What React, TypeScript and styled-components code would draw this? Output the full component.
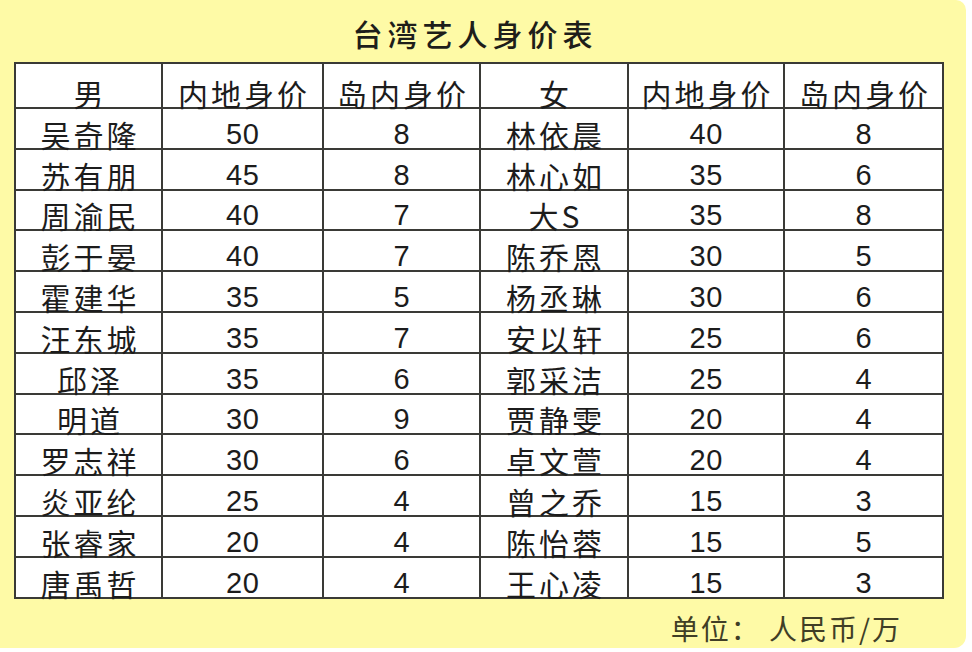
import React from "react";
import styled, { createGlobalStyle } from "styled-components";

const Global = createGlobalStyle`
  html, body { margin: 0; padding: 0; background: #ffffff; }
  body { width: 972px; height: 652px; overflow: hidden; }
`;

const Panel = styled.div`
  width: 966px;
  height: 648px;
  box-sizing: border-box;
  background: #fefaa6;
  border-top-right-radius: 10px;
  border-bottom-right-radius: 12px;
  padding-left: 14px;
  display: flex;
  flex-direction: column;
`;

const Title = styled.div`
  height: 62px;
  display: flex;
  align-items: center;
  justify-content: center;
  padding-right: 8px;
  width: 930px;
  box-sizing: border-box;
  font-family: "Noto Sans CJK SC", "Noto Sans", sans-serif;
  font-size: 30px;
  font-weight: 500;
  letter-spacing: 5px;
  color: #1e1e1a;
  padding-top: 4px;
`;

const Table = styled.div`
  display: grid;
  grid-template-columns: 147px 161px 157px 148px 156px 159px;
  grid-template-rows: 45px repeat(12, 40.8px);
  width: 930px;
  box-sizing: border-box;
  border-left: 2px solid #3a3a36;
  border-top: 2px solid #3a3a36;
  background: #ffffff;
`;

const Cell = styled.div<{ $num?: boolean }>`
  box-sizing: border-box;
  border-right: 2px solid #3a3a36;
  border-bottom: 2px solid #3a3a36;
  display: flex;
  align-items: flex-end;
  justify-content: center;
  overflow: visible;
  color: #1c1c1c;
  font-family: ${(p) =>
    p.$num
      ? `"Liberation Sans", Arial, "Noto Sans CJK SC", sans-serif`
      : `"Noto Sans CJK SC", "Noto Sans", sans-serif`};
  font-size: ${(p) => (p.$num ? "29px" : "30px")};
  letter-spacing: ${(p) => (p.$num ? "0.5px" : "3px")};
  line-height: ${(p) => (p.$num ? "29px" : "30px")};
`;

const CellText = styled.span<{ $num?: boolean }>`
  display: block;
  padding-left: ${(p) => (p.$num ? "0.5px" : "3px")};
  margin-bottom: -1px;
  white-space: nowrap;
`;

const Footer = styled.div`
  width: 888px;
  display: flex;
  justify-content: flex-end;
  margin-top: 12px;
  font-family: "Noto Sans CJK SC", "Noto Sans", sans-serif;
  font-size: 28px;
  line-height: 34px;
  letter-spacing: 2px;
  color: #403e26;
`;

const header = ["男", "内地身价", "岛内身价", "女", "内地身价", "岛内身价"];

const rows: [string, number, number, string, number, number][] = [
  ["吴奇隆", 50, 8, "林依晨", 40, 8],
  ["苏有朋", 45, 8, "林心如", 35, 6],
  ["周渝民", 40, 7, "大S", 35, 8],
  ["彭于晏", 40, 7, "陈乔恩", 30, 5],
  ["霍建华", 35, 5, "杨丞琳", 30, 6],
  ["汪东城", 35, 7, "安以轩", 25, 6],
  ["邱泽", 35, 6, "郭采洁", 25, 4],
  ["明道", 30, 9, "贾静雯", 20, 4],
  ["罗志祥", 30, 6, "卓文萱", 20, 4],
  ["炎亚纶", 25, 4, "曾之乔", 15, 3],
  ["张睿家", 20, 4, "陈怡蓉", 15, 5],
  ["唐禹哲", 20, 4, "王心凌", 15, 3],
];

export default function App() {
  return (
    <>
      <Global />
      <Panel>
        <Title>台湾艺人身价表</Title>
        <Table>
          {header.map((h, i) => (
            <Cell key={"h" + i}>
              <CellText>{h}</CellText>
            </Cell>
          ))}
          {rows.map((r, ri) =>
            r.map((v, ci) => {
              const num = typeof v === "number";
              return (
                <Cell key={ri + "-" + ci} $num={num}>
                  <CellText $num={num}>{v}</CellText>
                </Cell>
              );
            })
          )}
        </Table>
        <Footer>单位：&nbsp;人民币/万</Footer>
      </Panel>
    </>
  );
}
